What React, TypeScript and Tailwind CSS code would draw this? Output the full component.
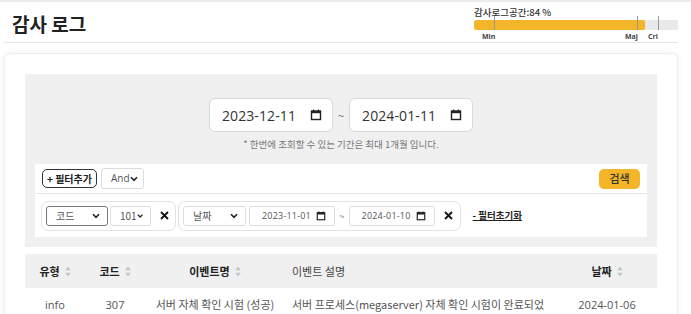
import React from "react";

const KR = '"Noto Sans CJK KR", "Noto Sans", sans-serif';
const LAT = '"Open Sans", "Noto Sans CJK KR", sans-serif';

function CalIcon({ size = 12 }: { size?: number }) {
  return (
    <svg width={size} height={size} viewBox="0 0 12 12">
      <rect x="1.5" y="2" width="9" height="8.5" fill="none" stroke="#222" strokeWidth="1.4" />
      <rect x="1.5" y="2" width="9" height="2.2" fill="#222" />
      <rect x="3" y="0.5" width="1.2" height="2" fill="#222" />
      <rect x="7.8" y="0.5" width="1.2" height="2" fill="#222" />
    </svg>
  );
}

function Chevron() {
  return (
    <svg width="8" height="6" viewBox="0 0 8 6">
      <path d="M1 1.2 L4 4.3 L7 1.2" fill="none" stroke="#222" strokeWidth="1.6" />
    </svg>
  );
}

function XIcon() {
  return (
    <svg width="9" height="9" viewBox="0 0 9 9">
      <path d="M1 1 L8 8 M8 1 L1 8" stroke="#111" strokeWidth="1.8" />
    </svg>
  );
}

function Sort() {
  return (
    <svg width="6" height="11" viewBox="0 0 6 11" className="ml-[5px]">
      <path d="M3 0.5 L5.8 4.3 L0.2 4.3 Z" fill="#c4c4c4" />
      <path d="M3 10.5 L5.8 6.7 L0.2 6.7 Z" fill="#c4c4c4" />
    </svg>
  );
}

function Select({ label, w, dark }: { label: string; w: number; dark?: boolean }) {
  return (
    <div
      className={`h-[20px] flex items-center justify-between pl-[9px] pr-[7px] rounded-[3px] bg-white border ${dark ? "border-[#777]" : "border-[#dcdcdc]"}`}
      style={{ width: w }}
    >
      <span className="text-[10px] text-[#555]" style={{ fontFamily: KR }}>{label}</span>
      <Chevron />
    </div>
  );
}

function SmallDate({ v }: { v: string }) {
  return (
    <div className="h-[20px] w-[86px] flex items-center justify-between pl-[12px] pr-[8px] rounded-[3px] bg-white border border-[#dcdcdc]">
      <span className="text-[9px] text-[#555] tracking-[0.2px]" style={{ fontFamily: LAT }}>{v}</span>
      <CalIcon size={10} />
    </div>
  );
}

function BigDate({ v }: { v: string }) {
  return (
    <div className="h-[34px] w-[124px] flex items-center justify-between pl-[12px] pr-[10px] rounded-[6px] bg-white border border-[#d8d8d8]">
      <span className="text-[14px] text-[#333] tracking-[0.1px]" style={{ fontFamily: LAT }}>{v}</span>
      <CalIcon size={12} />
    </div>
  );
}

export default function App() {
  return (
    <div className="w-[691px] h-[314px] overflow-hidden bg-white border-t-2 border-[#ececec]" style={{ fontFamily: KR }}>
      {/* Header */}
      <div className="mx-[4px] w-[674px] h-[41px] border-b border-[#e6e6e6] flex items-start justify-between">
        <div className="pl-[8px] pt-[9px] text-[19px] font-bold text-[#222] leading-[26px]">감사 로그</div>
        <div className="w-[204px] pt-[5px]">
          <div className="text-[9.5px] leading-[11px] text-[#333] font-medium">감사로그공간:84 %</div>
          <div className="relative h-[10px] mt-[2px] bg-[#e9e9e9]">
            <div className="absolute left-0 top-0 h-full w-[84%] bg-[#f4b528] rounded-l-[3px] rounded-r-[2px]" />
            <div className="absolute left-[10%] top-[-4px] h-[14px] w-px bg-[#999]" />
            <div className="absolute left-[80%] top-[-4px] h-[14px] w-px bg-[#999]" />
            <div className="absolute left-[90%] top-[-4px] h-[14px] w-px bg-[#999]" />
            <span className="absolute left-[8px] top-[12px] text-[7px] font-bold text-[#444]" style={{ fontFamily: LAT }}>Min</span>
            <span className="absolute left-[151px] top-[12px] text-[7px] font-bold text-[#444]" style={{ fontFamily: LAT }}>Maj</span>
            <span className="absolute left-[174px] top-[12px] text-[7px] font-bold text-[#444]" style={{ fontFamily: LAT }}>Cri</span>
          </div>
        </div>
      </div>

      {/* Card */}
      <div className="mx-[4px] mt-[10px] w-[674px] h-[300px] rounded-[6px] bg-white border border-[#efefef] shadow-[0_0_6px_rgba(0,0,0,0.07)] p-[20px]">
        {/* Search panel */}
        <div className="bg-[#f0f0f0] pt-[24px] px-[10px] pb-[10px]">
          <div className="flex items-center justify-center">
            <BigDate v="2023-12-11" />
            <span className="mx-[5px] text-[11px] text-[#666]">~</span>
            <BigDate v="2024-01-11" />
          </div>
          <div className="mt-[5px] text-center text-[9.5px] text-[#777] leading-[14px]">* 한번에 조회할 수 있는 기간은 최대 1개월 입니다.</div>
          <div className="mt-[13px] bg-white">
            <div className="h-[30px] border-b border-[#e6e6e6] flex items-center justify-between pl-[7px] pr-[7px]">
              <div className="flex items-center gap-[4px]">
                <div className="h-[19px] px-[4px] flex items-center rounded-[5px] border border-[#333] text-[10px] font-bold text-[#222]">+ 필터추가</div>
                <div className="h-[21px] w-[43px] flex items-center justify-between pl-[9px] pr-[5px] rounded-[3px] border border-[#dcdcdc]">
                  <span className="text-[10px] text-[#555]" style={{ fontFamily: LAT }}>And</span>
                  <Chevron />
                </div>
              </div>
              <div className="h-[20px] w-[41px] flex items-center justify-center rounded-[5px] bg-[#f4b528] text-[11px] text-[#333] font-medium">검색</div>
            </div>
            <div className="h-[43px] flex items-center pl-[6px]">
              <div className="h-[30px] flex items-center gap-[2px] pl-[4px] pr-[6px] rounded-[7px] border border-[#e2e2e2]">
                <Select label="코드" w={62} dark />
                <Select label="101" w={41} />
                <span className="ml-[7px] flex items-center"><XIcon /></span>
              </div>
              <div className="ml-[2px] h-[30px] flex items-center pl-[4px] pr-[7px] rounded-[7px] border border-[#e2e2e2]">
                <Select label="날짜" w={63} />
                <span className="ml-[3px]"><SmallDate v="2023-11-01" /></span>
                <span className="mx-[4px] text-[10px] text-[#888]">~</span>
                <SmallDate v="2024-01-10" />
                <span className="ml-[9px] flex items-center"><XIcon /></span>
              </div>
              <span className="ml-[12px] text-[9.5px] font-bold text-[#222] underline">- 필터초기화</span>
            </div>
          </div>
        </div>

        {/* Table */}
        <div className="mt-[7px] grid grid-cols-[60px_60px_140px_272px_100px] bg-[#f0f0f0] h-[34px] items-center text-[11px] text-[#222]">
          <div className="flex items-center justify-center font-bold">유형<Sort /></div>
          <div className="flex items-center justify-center font-bold">코드<Sort /></div>
          <div className="flex items-center justify-center font-bold">이벤트명<Sort /></div>
          <div className="pl-[7px] text-[#444]">이벤트 설명</div>
          <div className="flex items-center justify-center font-bold">날짜<Sort /></div>
        </div>
        <div className="grid grid-cols-[60px_60px_140px_272px_100px] pt-[9px] text-[11px] text-[#555] leading-[15px]">
          <div className="text-center" style={{ fontFamily: LAT }}>info</div>
          <div className="text-center" style={{ fontFamily: LAT }}>307</div>
          <div className="text-center whitespace-nowrap">서버 자체 확인 시험 (성공)</div>
          <div className="pl-[7px] pr-[10px]">서버 프로세스(megaserver) 자체 확인 시험이 완료되었습니다. (성공)</div>
          <div className="text-center" style={{ fontFamily: LAT }}>2024-01-06</div>
        </div>
      </div>
    </div>
  );
}
